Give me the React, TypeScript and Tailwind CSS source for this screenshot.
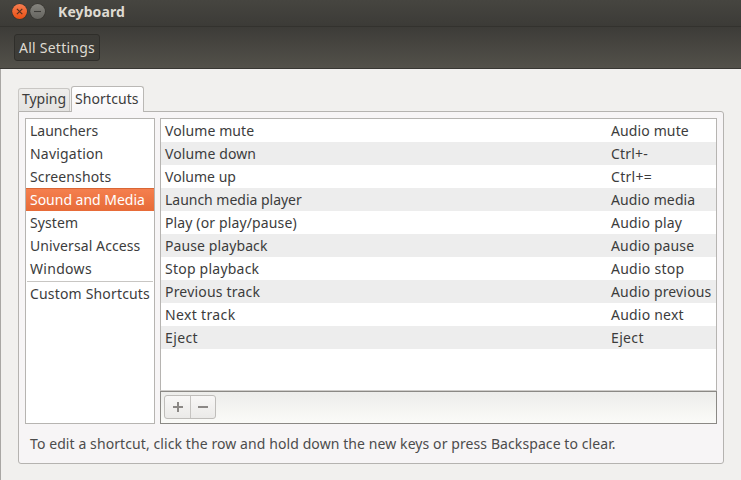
const categories: [string, string][] = [
  ['Launchers', 'tracking-[0]'],
  ['Navigation', 'tracking-[0.2px]'],
  ['Screenshots', 'tracking-[0.12px]'],
  ['Sound and Media', 'tracking-[-0.02px]'],
  ['System', 'tracking-[0.1px]'],
  ['Universal Access', 'tracking-[0.1px]'],
  ['Windows', 'tracking-[0.3px]'],
];

// Each row: action, its tracking, accelerator, its tracking.
const shortcuts: [string, string, string, string][] = [
  ['Volume mute', 'tracking-[0.1px]', 'Audio mute', 'tracking-[0.12px]'],
  ['Volume down', 'tracking-[0.1px]', 'Ctrl+-', 'tracking-[0.2px]'],
  ['Volume up', 'tracking-[0.03px]', 'Ctrl+=', 'tracking-[0.3px]'],
  ['Launch media player', 'tracking-[-0.02px]', 'Audio media', 'tracking-[0.12px]'],
  ['Play (or play/pause)', 'tracking-[0.13px]', 'Audio play', 'tracking-[0.2px]'],
  ['Pause playback', 'tracking-[0.1px]', 'Audio pause', 'tracking-[0.14px]'],
  ['Stop playback', 'tracking-[0.23px]', 'Audio stop', 'tracking-[0.25px]'],
  ['Previous track', 'tracking-[0.2px]', 'Audio previous', 'tracking-[0.16px]'],
  ['Next track', 'tracking-[0.35px]', 'Audio next', 'tracking-[0.22px]'],
  ['Eject', 'tracking-[0.4px]', 'Eject', 'tracking-[0.35px]'],
];

function TitleBar() {
  return (
    <div className="flex h-[27px] items-start border-b border-[#33322e] bg-linear-to-b from-[#464540] to-[#3c3b37] pl-[11px]">
      <svg className="mt-[3px] shrink-0" width="36" height="18" viewBox="0 0 36 18" fill="none">
        <defs>
          <linearGradient id="close" x1="0" y1="0" x2="0" y2="1">
            <stop offset="0" stopColor="#f67d50" />
            <stop offset="1" stopColor="#ea5014" />
          </linearGradient>
          <linearGradient id="min" x1="0" y1="0" x2="0" y2="1">
            <stop offset="0" stopColor="#85847e" />
            <stop offset="1" stopColor="#65645f" />
          </linearGradient>
        </defs>
        <circle cx="8.6" cy="8.5" r="8" fill="#35332e" />
        <circle cx="8.6" cy="8.5" r="7.4" fill="url(#close)" />
        <path d="M5.9 5.8l5.4 5.4M11.3 5.8l-5.4 5.4" stroke="#54301f" strokeWidth="1.2" />
        <circle cx="26.6" cy="8.5" r="8" fill="#35332e" />
        <circle cx="26.6" cy="8.5" r="7.4" fill="url(#min)" />
        <path d="M23 8.5h7" stroke="#3c3b37" strokeWidth="1.1" />
      </svg>
      <span className="ml-[11px] text-[14px] leading-6 font-bold tracking-[0.1px] text-[#dfdbd2]">Keyboard</span>
    </div>
  );
}

export default function App() {
  return (
    <div className="flex h-[480px] w-[741px] flex-col overflow-hidden bg-[#f1f0ee] font-['Noto_Sans','Open_Sans',sans-serif] text-[14px] whitespace-nowrap text-[#3c3c3c]">
      <TitleBar />
      <div className="flex h-[42px] items-start border-b border-[#383733] bg-linear-to-b from-[#3d3c38] to-[#53514a] pt-[7px] pl-[14px]">
        <button className="flex h-[27px] w-[86px] items-center justify-center rounded-[3px] border border-[#2f2e2a] bg-linear-to-b from-[#3c3b37] to-[#3e3d38] tracking-[0.25px] text-[#dfdbd2]">
          All Settings
        </button>
      </div>
      <div className="flex grow flex-col border-l border-[#a9a7a4] pt-[17px] pl-[17px]">
        <div className="flex h-[25px] items-end">
          <div className="flex h-[23px] w-[52px] justify-center rounded-t-[3px] border border-b-0 border-[#c9c7c4] bg-linear-to-b from-[#eeedeb] to-[#e4e3e1] leading-5">
            Typing
          </div>
          <div className="relative z-10 -mb-px ml-px flex h-[26px] w-[73px] rounded-t-[3px] border border-b-0 border-[#bab8b5] bg-linear-to-b from-white to-[#f7f5f6] pl-[3px] leading-6 tracking-[0.1px]">
            Shortcuts
          </div>
        </div>
        <div className="flex h-[353px] w-[706px] flex-col rounded-[3px] rounded-tl-none border border-[#b5b3b0] bg-[#f7f5f6] px-[6px] pt-[6px]">
          <div className="flex h-[306px] gap-[5px]">
            <div className="w-[130px] border border-[#b6b4b1] bg-white">
              {categories.map(([label, tracking]) => (
                <div
                  key={label}
                  className={`flex h-[23px] pl-1 leading-[23px] ${
                    label === 'Sound and Media'
                      ? 'bg-linear-to-b from-[#f5804f] to-[#e76b38] text-white shadow-[inset_0_1px_#d96635]'
                      : ''
                  }`}
                >
                  <span className={tracking}>{label}</span>
                </div>
              ))}
              <div className="mx-px mt-px h-px bg-[#c8c6c3]" />
              <div className="flex h-[23px] items-center pl-1 tracking-[0.17px]">Custom Shortcuts</div>
            </div>
            <div className="flex w-[557px] flex-col">
              <div className="h-[273px] border border-[#b6b4b1] border-b-[#cfcdca] bg-white">
                {shortcuts.map(([name, nameTracking, keys, keysTracking]) => (
                  <div key={name} className="flex h-[23px] items-center pl-1 even:bg-[#ededed]">
                    <div className="w-[446px]">
                      <span className={nameTracking}>{name}</span>
                    </div>
                    <span className={keysTracking}>{keys}</span>
                  </div>
                ))}
              </div>
              <div className="flex h-[33px] items-start border border-[#8b8985] bg-linear-to-b from-[#ededeb] to-[#fbfbf8] pt-[3px] pl-[3px]">
                <div className="flex h-6 w-[52px] rounded-[3px] border border-[#bfbdba] bg-linear-to-b from-[#f8f7f6] to-[#ebeae8]">
                  <button className="flex w-[26px] items-center justify-center border-r border-[#c6c4c1]">
                    <svg width="10" height="10" viewBox="0 0 10 10" stroke="#8b8885" strokeWidth="2">
                      <path d="M5 0v10M0 5h10" />
                    </svg>
                  </button>
                  <button className="flex w-6 items-center justify-center">
                    <svg width="10" height="10" viewBox="0 0 10 10" stroke="#8b8885" strokeWidth="2">
                      <path d="M0 5h10" />
                    </svg>
                  </button>
                </div>
              </div>
            </div>
          </div>
          <div className="mt-[8px] pl-[5px] leading-6 tracking-[0.09px] text-[#4c4c4c]">
            To edit a shortcut, click the row and hold down the new keys or press Backspace to clear.
          </div>
        </div>
      </div>
    </div>
  );
}
